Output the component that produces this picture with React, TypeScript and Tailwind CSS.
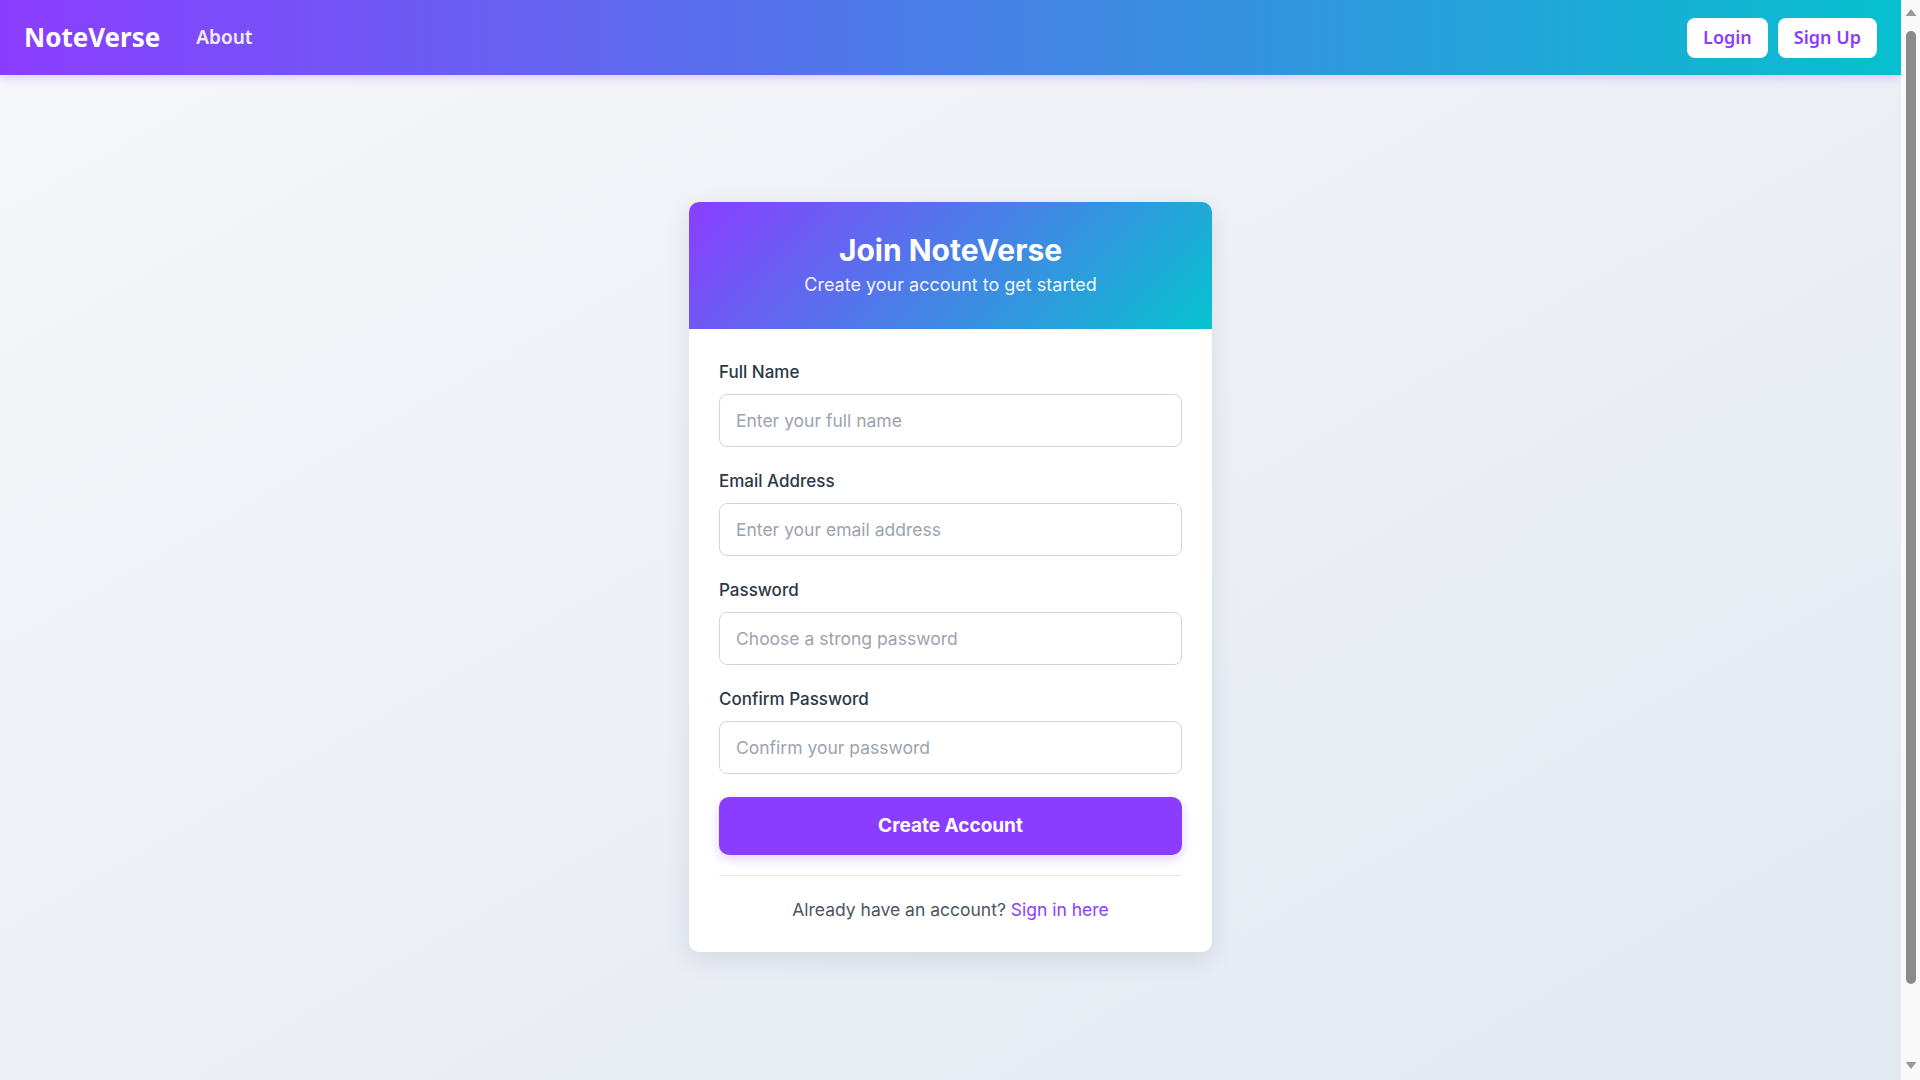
import React from "react";

const fields = [
  { label: "Full Name", type: "text", placeholder: "Enter your full name" },
  { label: "Email Address", type: "email", placeholder: "Enter your email address" },
  { label: "Password", type: "password", placeholder: "Choose a strong password" },
  { label: "Confirm Password", type: "password", placeholder: "Confirm your password" },
];

function Navbar() {
  return (
    <nav className="h-[75px] px-6 flex items-center justify-between bg-[linear-gradient(90deg,#8b3dff,#06c0cf)] shadow-[0_2px_10px_rgba(139,61,255,0.25)] font-['Noto_Sans',sans-serif]">
      <div className="flex items-center gap-[36px]">
        <a href="#" className="text-[26px] font-bold text-white">
          NoteVerse
        </a>
        <a href="#" className="text-[19px] font-semibold text-white/90">
          About
        </a>
      </div>
      <div className="flex items-center gap-[10px]">
        <button className="h-10 px-4 rounded-lg bg-white text-[#8b3dff] text-[18px] font-semibold">
          Login
        </button>
        <button className="h-10 px-4 rounded-lg bg-white text-[#8b3dff] text-[18px] font-semibold">
          Sign Up
        </button>
      </div>
    </nav>
  );
}

// page scrollbar as it appears in the screenshot
function Scrollbar() {
  return (
    <aside className="w-[19px] shrink-0 h-full bg-[#f9f9f9] flex flex-col items-center">
      <svg width="14" height="12" viewBox="0 0 14 12" className="mt-[6px] shrink-0">
        <path d="M1.5 10 L7 3 L12.5 10 Z" fill="#9a9a9a" />
      </svg>
      <div className="w-[10px] mt-[13px] h-[953px] rounded-full bg-[#8a8a8a]" />
      <div className="flex-1" />
      <svg width="14" height="12" viewBox="0 0 14 12" className="mb-[8px] shrink-0">
        <path d="M1.5 2 L7 9 L12.5 2 Z" fill="#9a9a9a" />
      </svg>
    </aside>
  );
}

export default function App() {
  return (
    <div className="h-screen flex overflow-hidden font-['Inter',sans-serif]">
      <div className="flex-1 min-w-0 overflow-hidden bg-gradient-to-br from-[#f6f7fa] to-[#e3e8f1]">
        <Navbar />

        <main className="pt-[127px] pb-[227px] flex justify-center">
          <div className="w-[523px] bg-white rounded-[10px] overflow-hidden shadow-[0_8px_24px_rgba(30,41,80,0.10)]">
            {/* Card header */}
            <div className="h-[127px] flex flex-col items-center justify-center bg-[linear-gradient(135deg,#8b3dff,#06c3cf)] text-white">
              <h1 className="text-[30px] leading-9 font-bold">Join NoteVerse</h1>
              <p className="text-lg leading-7 mt-[3px] text-white/95">Create your account to get started</p>
            </div>

            {/* Form */}
            <form className="px-[30px] pt-[31px] pb-[30px]" onSubmit={(e) => e.preventDefault()}>
              {fields.map((f) => (
                <div key={f.label} className="mb-[22px]">
                  <label className="block text-[17px] leading-6 font-medium text-[#2d3748] mb-[10px]">
                    {f.label}
                  </label>
                  <input
                    type={f.type}
                    placeholder={f.placeholder}
                    className="w-full h-[53px] px-4 rounded-lg border border-[#d1d5db] text-[17.5px] text-[#1f2937] placeholder:text-[#9ca3af] outline-none"
                  />
                </div>
              ))}

              <button
                type="submit"
                className="w-full h-[58px] mt-[1px] rounded-[10px] bg-[#8b3dff] text-white text-[19px] font-bold shadow-[0_4px_12px_rgba(139,61,255,0.25)]"
              >
                Create Account
              </button>

              <div className="mt-5 pt-[22px] border-t border-[#e5e7eb] text-center text-[17.5px] leading-6 text-[#4b5563]">
                Already have an account?{" "}
                <a href="#" className="text-[#8b3dff]">
                  Sign in here
                </a>
              </div>
            </form>
          </div>
        </main>
      </div>
      <Scrollbar />
    </div>
  );
}
